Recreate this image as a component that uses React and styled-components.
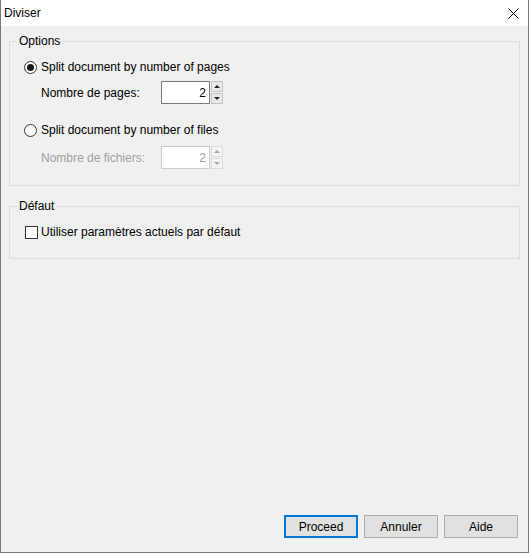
import React from 'react';
import styled, { createGlobalStyle } from 'styled-components';

const Global = createGlobalStyle`
  html, body { margin: 0; padding: 0; background: #f0f0f0; }
  body { font-family: "Liberation Sans", Arial, sans-serif; font-size: 12px; color: #000; }
`;

const Window = styled.div`
  width: 529px;
  height: 553px;
  box-sizing: border-box;
  border: 1px solid #777;
  border-top: none;
  display: flex;
  flex-direction: column;
  background: #f0f0f0;
`;

const TitleBar = styled.div`
  height: 26px;
  flex-shrink: 0;
  background: #fff;
  display: flex;
  align-items: center;
  justify-content: space-between;
  padding: 0 9px 0 3px;
`;

const Title = styled.span`
  line-height: 16px;
`;

const Body = styled.div`
  flex: 1;
  display: flex;
  flex-direction: column;
  padding: 15px 8px 14px 8px;
`;

const GroupBox = styled.div`
  border: 1px solid #dcdcdc;
  display: flex;
  flex-direction: column;
  padding: 0 0 ${p => p.$pb}px 14px;
  margin-top: ${p => p.$mt || 0}px;
`;

const Legend = styled.div`
  align-self: flex-start;
  margin: -9px 0 0 -7px;
  padding: 0 2px;
  line-height: 16px;
  background: #f0f0f0;
`;

const OptionRow = styled.label`
  display: flex;
  align-items: center;
  height: 16px;
  margin-top: ${p => p.$mt}px;
  color: ${p => (p.$disabled ? '#a0a0a0' : '#000')};
`;

const Radio = styled.span`
  width: 13px;
  height: 13px;
  box-sizing: border-box;
  border-radius: 50%;
  border: 1px solid #333;
  background: #fff;
  display: flex;
  align-items: center;
  justify-content: center;
  margin-right: 4px;
  &::after {
    content: '';
    width: 7px;
    height: 7px;
    border-radius: 50%;
    background: ${p => (p.$checked ? '#1a1a1a' : 'transparent')};
  }
`;

const Check = styled.span`
  width: 13px;
  height: 13px;
  box-sizing: border-box;
  border: 1px solid #333;
  background: #fff;
  margin: 0 3px 0 1px;
`;

const SpinRow = styled.div`
  display: flex;
  align-items: center;
  height: 23px;
  padding-left: 17px;
  margin-top: ${p => p.$mt}px;
  color: ${p => (p.$disabled ? '#a0a0a0' : '#000')};
`;

const SpinLabel = styled.span`
  width: 120px;
`;

const SpinInput = styled.div`
  width: 49px;
  height: 23px;
  box-sizing: border-box;
  border: 1px solid ${p => (p.$disabled ? '#cccccc' : '#7a7a7a')};
  background: #fff;
  display: flex;
  align-items: center;
  justify-content: flex-end;
  padding-right: 3px;
  color: ${p => (p.$disabled ? '#a0a0a0' : '#000')};
`;

const Spinner = styled.div`
  display: flex;
  flex-direction: column;
  gap: 1px;
  margin-left: 1px;
  height: 23px;
`;

const SpinBtn = styled.div`
  width: 12px;
  flex: 1;
  box-sizing: border-box;
  border: 1px solid ${p => (p.$disabled ? '#dcdcdc' : '#c4c4c4')};
  background: ${p => (p.$disabled ? '#f4f4f4' : '#e8e8e8')};
  display: flex;
  align-items: center;
  justify-content: center;
  &::after {
    content: '';
    width: 0;
    height: 0;
    border-left: 3px solid transparent;
    border-right: 3px solid transparent;
    ${p =>
      p.$up
        ? `border-bottom: 3px solid ${p.$disabled ? '#a8a8a8' : '#222'};`
        : `border-top: 3px solid ${p.$disabled ? '#a8a8a8' : '#222'};`}
  }
`;

const ButtonBar = styled.div`
  margin-top: auto;
  display: flex;
  justify-content: flex-end;
  gap: 6px;
  padding-right: 2px;
`;

const Button = styled.button`
  width: 74px;
  height: 23px;
  box-sizing: border-box;
  font-family: inherit;
  font-size: 12px;
  color: #000;
  background: #e1e1e1;
  border: ${p => (p.$default ? '2px solid #0078d7' : '1px solid #adadad')};
  padding: 0;
  margin: 0;
`;

function Spin({ label, value, disabled, mt }) {
  return (
    <SpinRow $mt={mt} $disabled={disabled}>
      <SpinLabel>{label}</SpinLabel>
      <SpinInput $disabled={disabled}>{value}</SpinInput>
      <Spinner>
        <SpinBtn $up $disabled={disabled} />
        <SpinBtn $disabled={disabled} />
      </Spinner>
    </SpinRow>
  );
}

export default function App() {
  return (
    <>
      <Global />
      <Window>
        <TitleBar>
          <Title>Diviser</Title>
          <svg width="11" height="11" viewBox="0 0 11 11">
            <path d="M0.5 0.5 L10.5 10.5 M10.5 0.5 L0.5 10.5" stroke="#000" strokeWidth="1" fill="none" />
          </svg>
        </TitleBar>
        <Body>
          <GroupBox $pb={16}>
            <Legend>Options</Legend>
            <OptionRow $mt={10}>
              <Radio $checked />
              Split document by number of pages
            </OptionRow>
            <Spin label="Nombre de pages:" value="2" mt={6} />
            <OptionRow $mt={18}>
              <Radio />
              Split document by number of files
            </OptionRow>
            <Spin label="Nombre de fichiers:" value="2" mt={8} disabled />
          </GroupBox>
          <GroupBox $pb={18} $mt={20}>
            <Legend>Défaut</Legend>
            <OptionRow $mt={10}>
              <Check />
              Utiliser paramètres actuels par défaut
            </OptionRow>
          </GroupBox>
          <ButtonBar>
            <Button $default>Proceed</Button>
            <Button>Annuler</Button>
            <Button>Aide</Button>
          </ButtonBar>
        </Body>
      </Window>
    </>
  );
}
